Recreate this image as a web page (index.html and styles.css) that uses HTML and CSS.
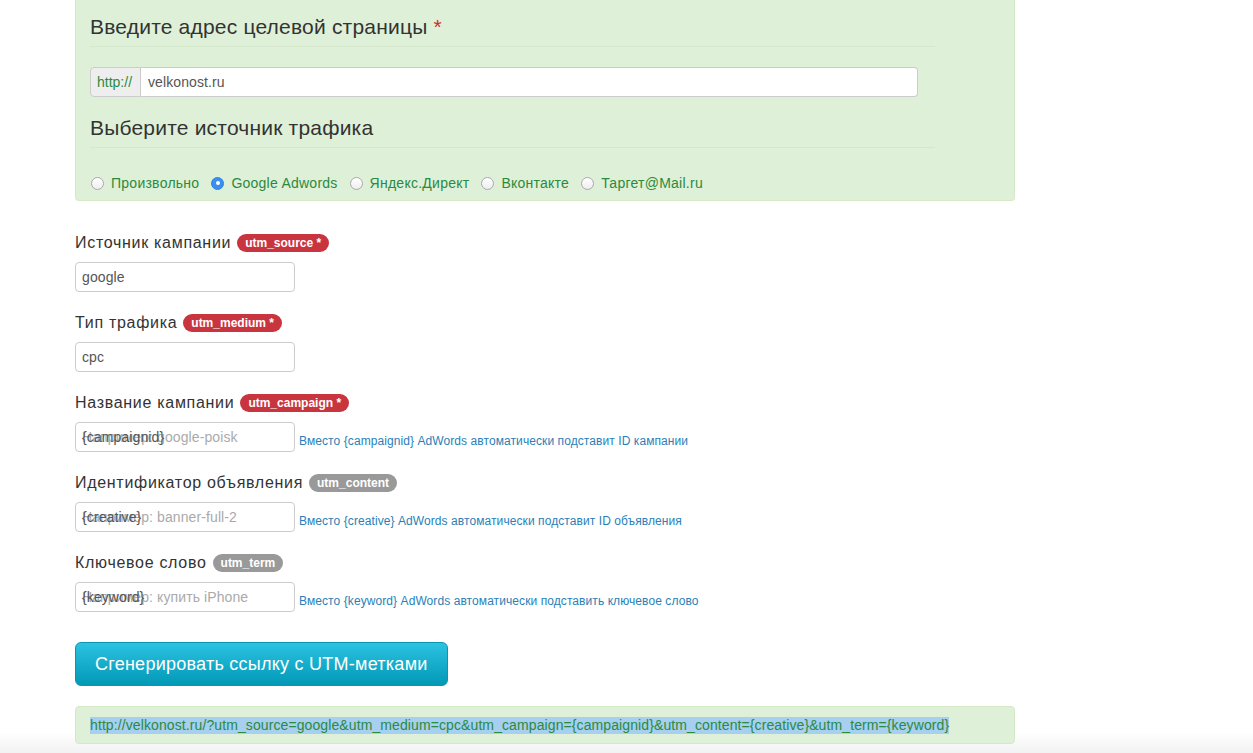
FILE: index.html
```html
<!DOCTYPE html>
<html lang="ru">
<head>
<meta charset="utf-8">
<title>UTM</title>
<link rel="stylesheet" href="styles.css">
</head>
<body>
<div class="container">
  <div class="panel">
    <h3 class="title">Введите адрес целевой страницы <span class="req">*</span></h3>
    <hr class="rule">
    <div class="input-group">
      <span class="addon">http://</span>
      <div class="field wide">velkonost.ru</div>
    </div>
    <h3 class="title second">Выберите источник трафика</h3>
    <hr class="rule">
    <div class="radios">
      <label class="radio"><span class="dot"></span>Произвольно</label>
      <label class="radio"><span class="dot on"></span>Google Adwords</label>
      <label class="radio"><span class="dot"></span>Яндекс.Директ</label>
      <label class="radio"><span class="dot"></span>Вконтакте</label>
      <label class="radio"><span class="dot"></span>Таргет@Mail.ru</label>
    </div>
  </div>

  <div class="fields">
    <div class="group">
      <div class="label">Источник кампании <span class="badge red">utm_source *</span></div>
      <div class="row"><div class="field">google</div></div>
    </div>
    <div class="group">
      <div class="label">Тип трафика <span class="badge red">utm_medium *</span></div>
      <div class="row"><div class="field">cpc</div></div>
    </div>
    <div class="group">
      <div class="label">Название кампании <span class="badge red">utm_campaign *</span></div>
      <div class="row">
        <div class="field stack"><span class="ph">Например: google-poisk</span><span class="val">{campaignid}</span></div>
        <span class="help">Вместо {campaignid} AdWords автоматически подставит ID кампании</span>
      </div>
    </div>
    <div class="group">
      <div class="label">Идентификатор объявления <span class="badge grey">utm_content</span></div>
      <div class="row">
        <div class="field stack"><span class="ph">Например: banner-full-2</span><span class="val">{creative}</span></div>
        <span class="help">Вместо {creative} AdWords автоматически подставит ID объявления</span>
      </div>
    </div>
    <div class="group last">
      <div class="label">Ключевое слово <span class="badge grey">utm_term</span></div>
      <div class="row">
        <div class="field stack"><span class="ph">Например: купить iPhone</span><span class="val">{keyword}</span></div>
        <span class="help">Вместо {keyword} AdWords автоматически подставить ключевое слово</span>
      </div>
    </div>
  </div>

  <button class="btn">Сгенерировать ссылку с UTM-метками</button>

  <div class="result"><span class="sel">http://velkonost.ru/?utm_source=google&amp;utm_medium=cpc&amp;utm_campaign={campaignid}&amp;utm_content={creative}&amp;utm_term={keyword}</span></div>
</div>
</body>
</html>
```
FILE: styles.css
```css
html, body {
  margin: 0;
  padding: 0;
}
body {
  font-family: "Liberation Sans", Arial, sans-serif;
  color: #333;
  min-height: 753px;
  background: linear-gradient(to bottom, #fff 0, #fff 732px, #f2f2f2 753px);
}
.container {
  width: 940px;
  margin-left: 75px;
}
.panel {
  background: #dff0d8;
  border: 1px solid #d6e9c6;
  border-top: none;
  border-radius: 0 0 4px 4px;
  padding: 15px 15px 7px 14px;
}
.title {
  margin: 0;
  font-size: 21px;
  font-weight: normal;
  line-height: 23px;
  letter-spacing: 0.2px;
  color: #333;
}
.title.second {
  margin-top: 19px;
}
.req {
  color: #c9302c;
}
.rule {
  width: 845px;
  margin: 8px 0 0;
  border: 0;
  border-top: 1px solid #d5e8cd;
  height: 0;
}
.input-group {
  display: flex;
  width: 828px;
  height: 30px;
  margin-top: 20px;
}
.addon {
  display: flex;
  align-items: center;
  padding: 0 5px 0 6px;
  width: 38px;
  background: #eee;
  border: 1px solid #ccc;
  border-radius: 4px 0 0 4px;
  color: #2b8a3e;
  font-size: 14px;
}
.field {
  box-sizing: border-box;
  width: 220px;
  height: 30px;
  display: flex;
  align-items: center;
  padding: 0 6px;
  background: #fff;
  border: 1px solid #ccc;
  border-radius: 4px;
  font-size: 14px;
  letter-spacing: 0.1px;
  color: #555;
}
.field.wide {
  flex: 1;
  width: auto;
  border-left: none;
  border-radius: 0 4px 4px 0;
  padding-left: 7px;
}
.radios {
  display: flex;
  margin-top: 25px;
  height: 20px;
  align-items: center;
}
.radio {
  display: flex;
  align-items: center;
  font-size: 14px;
  letter-spacing: 0.25px;
  color: #2b8a3e;
  margin-right: 11px;
}
.dot {
  box-sizing: border-box;
  width: 13px;
  height: 13px;
  border-radius: 50%;
  border: 1px solid #aaa;
  background: linear-gradient(#fff, #eee);
  margin: 0 7px 0 1px;
  display: flex;
  align-items: center;
  justify-content: center;
}
.dot.on {
  border-color: #2b86e8;
  background: #3a8ef0;
}
.dot.on::after {
  content: "";
  width: 4px;
  height: 4px;
  border-radius: 50%;
  background: #fff;
}
.fields {
  margin-top: 32px;
}
.group {
  margin-bottom: 21px;
}
.group.last {
  margin-bottom: 0;
}
.label {
  display: flex;
  align-items: center;
  font-size: 16px;
  letter-spacing: 0.7px;
  line-height: 20px;
  height: 20px;
  margin-bottom: 9px;
  color: #333;
}
.badge {
  display: inline-block;
  margin-left: 6px;
  padding: 0 8px;
  height: 18px;
  line-height: 18px;
  border-radius: 9px;
  font-size: 12px;
  letter-spacing: 0;
  font-weight: bold;
  color: #fff;
}
.badge.red {
  background: #c9353f;
}
.badge.grey {
  background: #999;
}
.row {
  display: flex;
  align-items: flex-end;
}
.stack {
  display: grid;
  align-items: center;
}
.stack > span {
  grid-area: 1 / 1;
}
.ph {
  color: #aaa;
}
.val {
  color: #555;
}
.help {
  margin-left: 4px;
  margin-bottom: 2px;
  font-size: 12px;
  letter-spacing: 0.08px;
  line-height: 17px;
  color: #2a7fb8;
}
.btn {
  display: block;
  margin-top: 30px;
  height: 44px;
  padding: 0 19px;
  border: 1px solid #0a96b3;
  border-radius: 6px;
  background: linear-gradient(to bottom, #2cc2e2, #0199b6);
  color: #fff;
  font-family: "Liberation Sans", Arial, sans-serif;
  font-size: 18px;
  letter-spacing: 0.25px;
  cursor: pointer;
}
.result {
  margin-top: 20px;
  box-sizing: border-box;
  height: 38px;
  padding: 0 14px;
  display: flex;
  align-items: center;
  background: #dff0d8;
  border: 1px solid #d6e9c6;
  border-radius: 4px;
  font-size: 14px;
  letter-spacing: 0.1px;
  color: #2b8a3e;
}
.sel {
  background: #a6cff0;
  line-height: 17px;
}
```
